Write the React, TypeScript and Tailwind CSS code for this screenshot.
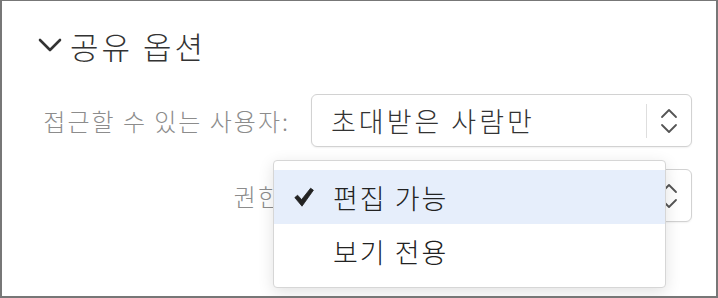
const font = "font-['Noto_Sans_CJK_KR','Noto_Sans',sans-serif]";

function Chevron() {
  return (
    <svg aria-hidden="true" className="h-[14px] w-[24px]" fill="none" viewBox="0 0 24 14">
      <path d="M2 2 12 12 22 2" stroke="#333" strokeLinecap="round" strokeLinejoin="round" strokeWidth="2.6" />
    </svg>
  );
}

function UpDown() {
  return (
    <svg aria-hidden="true" className="h-[26px] w-[18px]" fill="none" viewBox="0 0 18 26">
      <path d="M2 9 9 2 16 9" stroke="#555" strokeLinecap="round" strokeLinejoin="round" strokeWidth="1.8" />
      <path d="M2 17 9 24 16 17" stroke="#555" strokeLinecap="round" strokeLinejoin="round" strokeWidth="1.8" />
    </svg>
  );
}

function Check() {
  return (
    <svg aria-hidden="true" className="h-[20px] w-[20px]" viewBox="0 0 20 20">
      <path d="M0.8 10.6 3.6 8.2 7.6 12.6 16.6 1.2 19.4 3.2 8 19.2Z" fill="#222" strokeLinejoin="round" stroke="#222" strokeWidth="0.8" />
    </svg>
  );
}

function Select({ value }: { value?: string }) {
  return (
    <div className="flex h-[53px] w-[381px] items-center rounded-[6px] border border-[#d2d2d2] bg-white shadow-[0_1px_2px_rgba(0,0,0,0.06)]">
      <span className="flex-1 pl-[19px] text-[27px] font-light leading-none tracking-[3px] text-[#333]">{value}</span>
      <span className="h-[34px] w-px bg-[#dedede]" />
      <span className="flex w-[44px] items-center justify-center">
        <UpDown />
      </span>
    </div>
  );
}

export default function App() {
  return (
    <div className={`${font} relative h-[298px] w-[718px] overflow-hidden border-b-2 border-l-2 border-r-2 border-t border-[#777] bg-white`}>
      <div className="box-content flex h-[58px] items-center gap-[8px] pl-[36px] pt-[15px]">
        <Chevron />
        <span className="text-[31px] font-light leading-none tracking-[3px] text-[#333]">공유 옵션</span>
      </div>

      <div className="mt-[20px] grid grid-cols-[288px_381px] items-center gap-x-[21px] gap-y-[22px]">
        <span className="text-right text-[24px] font-light leading-none tracking-[2px] text-[#8c8c8c]">접근할 수 있는 사용자:</span>
        <Select value="초대받은 사람만" />
        <span className="text-right text-[24px] font-light leading-none tracking-[2px] text-[#8c8c8c]">권한:</span>
        <Select />
      </div>

      <div className="absolute left-[271px] top-[159px] w-[393px] rounded-[4px] border border-[#d6d6d6] bg-white py-[9px] shadow-[0_4px_16px_rgba(0,0,0,0.12)]">
        <div className="flex h-[54px] items-center bg-[#e6eefb]">
          <span className="flex w-[59px] justify-end pr-[19px]">
            <Check />
          </span>
          <span className="text-[27px] font-light leading-none tracking-[2px] text-[#222]">편집 가능</span>
        </div>
        <div className="flex h-[54px] items-center pl-[59px]">
          <span className="text-[27px] font-light leading-none tracking-[2px] text-[#222]">보기 전용</span>
        </div>
      </div>
    </div>
  );
}
